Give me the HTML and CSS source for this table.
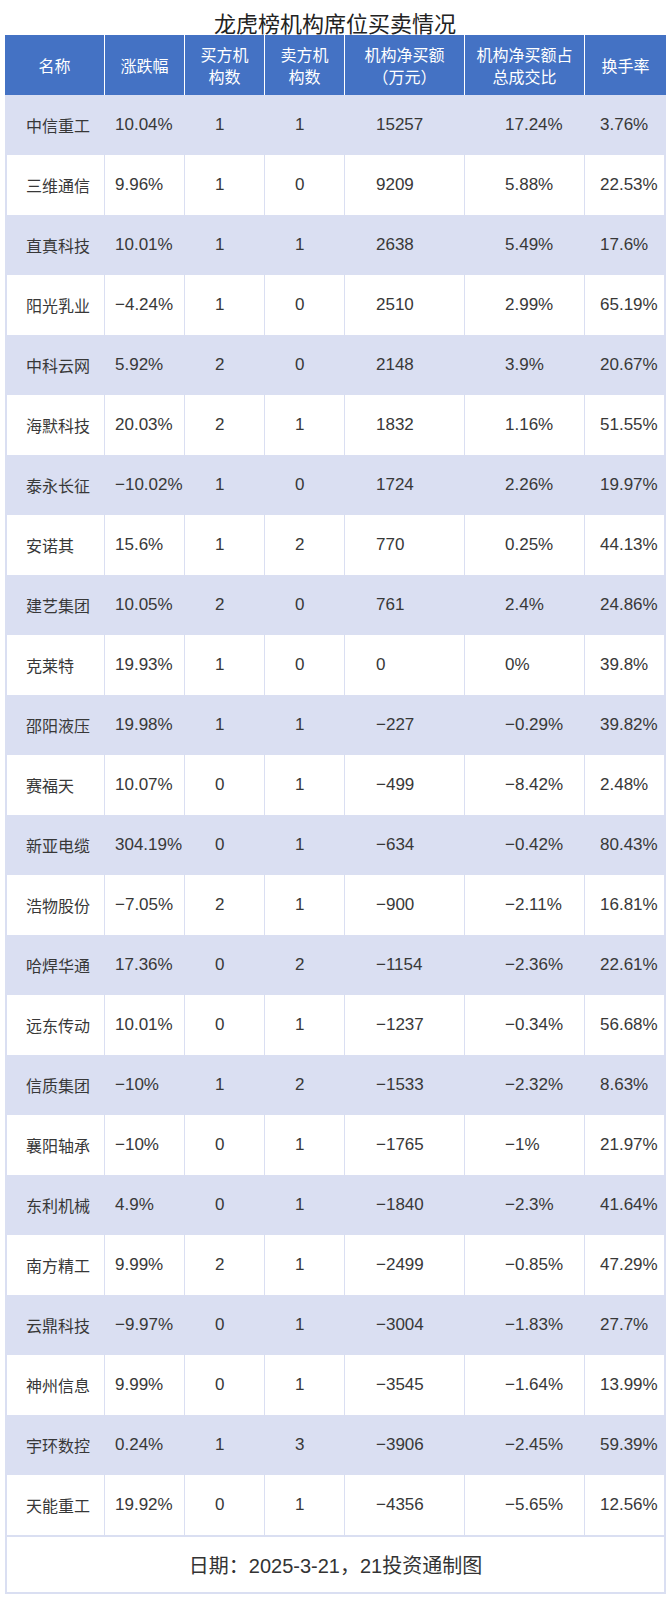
FILE: index.html
```html
<!DOCTYPE html>
<html lang="zh">
<head>
<meta charset="utf-8">
<title>龙虎榜机构席位买卖情况</title>
<link rel="stylesheet" href="styles.css">
</head>
<body>
<div class="page">
  <h1 class="title">龙虎榜机构席位买卖情况</h1>
  <div class="tbl">
    <div class="head">
      <div class="h">名称</div>
      <div class="h">涨跌幅</div>
      <div class="h">买方机<br>构数</div>
      <div class="h">卖方机<br>构数</div>
      <div class="h">机构净买额<br>（万元）</div>
      <div class="h">机构净买额占<br>总成交比</div>
      <div class="h">换手率</div>
    </div>
    <div class="body">
      <div class="row odd"><div class="c c1">中信重工</div><div class="c c2">10.04%</div><div class="c c3">1</div><div class="c c4">1</div><div class="c c5">15257</div><div class="c c6">17.24%</div><div class="c c7">3.76%</div></div>
      <div class="row"><div class="c c1">三维通信</div><div class="c c2">9.96%</div><div class="c c3">1</div><div class="c c4">0</div><div class="c c5">9209</div><div class="c c6">5.88%</div><div class="c c7">22.53%</div></div>
      <div class="row odd"><div class="c c1">直真科技</div><div class="c c2">10.01%</div><div class="c c3">1</div><div class="c c4">1</div><div class="c c5">2638</div><div class="c c6">5.49%</div><div class="c c7">17.6%</div></div>
      <div class="row"><div class="c c1">阳光乳业</div><div class="c c2">−4.24%</div><div class="c c3">1</div><div class="c c4">0</div><div class="c c5">2510</div><div class="c c6">2.99%</div><div class="c c7">65.19%</div></div>
      <div class="row odd"><div class="c c1">中科云网</div><div class="c c2">5.92%</div><div class="c c3">2</div><div class="c c4">0</div><div class="c c5">2148</div><div class="c c6">3.9%</div><div class="c c7">20.67%</div></div>
      <div class="row"><div class="c c1">海默科技</div><div class="c c2">20.03%</div><div class="c c3">2</div><div class="c c4">1</div><div class="c c5">1832</div><div class="c c6">1.16%</div><div class="c c7">51.55%</div></div>
      <div class="row odd"><div class="c c1">泰永长征</div><div class="c c2">−10.02%</div><div class="c c3">1</div><div class="c c4">0</div><div class="c c5">1724</div><div class="c c6">2.26%</div><div class="c c7">19.97%</div></div>
      <div class="row"><div class="c c1">安诺其</div><div class="c c2">15.6%</div><div class="c c3">1</div><div class="c c4">2</div><div class="c c5">770</div><div class="c c6">0.25%</div><div class="c c7">44.13%</div></div>
      <div class="row odd"><div class="c c1">建艺集团</div><div class="c c2">10.05%</div><div class="c c3">2</div><div class="c c4">0</div><div class="c c5">761</div><div class="c c6">2.4%</div><div class="c c7">24.86%</div></div>
      <div class="row"><div class="c c1">克莱特</div><div class="c c2">19.93%</div><div class="c c3">1</div><div class="c c4">0</div><div class="c c5">0</div><div class="c c6">0%</div><div class="c c7">39.8%</div></div>
      <div class="row odd"><div class="c c1">邵阳液压</div><div class="c c2">19.98%</div><div class="c c3">1</div><div class="c c4">1</div><div class="c c5">−227</div><div class="c c6">−0.29%</div><div class="c c7">39.82%</div></div>
      <div class="row"><div class="c c1">赛福天</div><div class="c c2">10.07%</div><div class="c c3">0</div><div class="c c4">1</div><div class="c c5">−499</div><div class="c c6">−8.42%</div><div class="c c7">2.48%</div></div>
      <div class="row odd"><div class="c c1">新亚电缆</div><div class="c c2">304.19%</div><div class="c c3">0</div><div class="c c4">1</div><div class="c c5">−634</div><div class="c c6">−0.42%</div><div class="c c7">80.43%</div></div>
      <div class="row"><div class="c c1">浩物股份</div><div class="c c2">−7.05%</div><div class="c c3">2</div><div class="c c4">1</div><div class="c c5">−900</div><div class="c c6">−2.11%</div><div class="c c7">16.81%</div></div>
      <div class="row odd"><div class="c c1">哈焊华通</div><div class="c c2">17.36%</div><div class="c c3">0</div><div class="c c4">2</div><div class="c c5">−1154</div><div class="c c6">−2.36%</div><div class="c c7">22.61%</div></div>
      <div class="row"><div class="c c1">远东传动</div><div class="c c2">10.01%</div><div class="c c3">0</div><div class="c c4">1</div><div class="c c5">−1237</div><div class="c c6">−0.34%</div><div class="c c7">56.68%</div></div>
      <div class="row odd"><div class="c c1">信质集团</div><div class="c c2">−10%</div><div class="c c3">1</div><div class="c c4">2</div><div class="c c5">−1533</div><div class="c c6">−2.32%</div><div class="c c7">8.63%</div></div>
      <div class="row"><div class="c c1">襄阳轴承</div><div class="c c2">−10%</div><div class="c c3">0</div><div class="c c4">1</div><div class="c c5">−1765</div><div class="c c6">−1%</div><div class="c c7">21.97%</div></div>
      <div class="row odd"><div class="c c1">东利机械</div><div class="c c2">4.9%</div><div class="c c3">0</div><div class="c c4">1</div><div class="c c5">−1840</div><div class="c c6">−2.3%</div><div class="c c7">41.64%</div></div>
      <div class="row"><div class="c c1">南方精工</div><div class="c c2">9.99%</div><div class="c c3">2</div><div class="c c4">1</div><div class="c c5">−2499</div><div class="c c6">−0.85%</div><div class="c c7">47.29%</div></div>
      <div class="row odd"><div class="c c1">云鼎科技</div><div class="c c2">−9.97%</div><div class="c c3">0</div><div class="c c4">1</div><div class="c c5">−3004</div><div class="c c6">−1.83%</div><div class="c c7">27.7%</div></div>
      <div class="row"><div class="c c1">神州信息</div><div class="c c2">9.99%</div><div class="c c3">0</div><div class="c c4">1</div><div class="c c5">−3545</div><div class="c c6">−1.64%</div><div class="c c7">13.99%</div></div>
      <div class="row odd"><div class="c c1">宇环数控</div><div class="c c2">0.24%</div><div class="c c3">1</div><div class="c c4">3</div><div class="c c5">−3906</div><div class="c c6">−2.45%</div><div class="c c7">59.39%</div></div>
      <div class="row"><div class="c c1">天能重工</div><div class="c c2">19.92%</div><div class="c c3">0</div><div class="c c4">1</div><div class="c c5">−4356</div><div class="c c6">−5.65%</div><div class="c c7">12.56%</div></div>
    </div>
    <div class="foot">日期：2025-3-21，21投资通制图</div>
  </div>
</div>
</body>
</html>
```

FILE: styles.css
```css
* { box-sizing: border-box; }

body {
  margin: 0;
  background: #ffffff;
  color: #333333;
  font-family: "Liberation Sans", "Noto Sans CJK SC", sans-serif;
}

.page {
  width: 670px;
}

.title {
  margin: 0;
  height: 35px;
  padding-top: 9px;
  font-family: "Noto Sans CJK SC", sans-serif;
  font-weight: 400;
  font-size: 22px;
  line-height: 26px;
  text-align: center;
  color: #222222;
}

.tbl {
  margin-left: 5px;
  width: 661px;
}

.head {
  display: grid;
  grid-template-columns: 100px 80px 80px 80px 120px 120px 81px;
  height: 60px;
  background: #4472c4;
}

.h {
  display: flex;
  align-items: center;
  justify-content: center;
  text-align: center;
  color: #ffffff;
  font-family: "Noto Sans CJK SC", sans-serif;
  font-size: 16px;
  line-height: 22px;
  border-right: 1px solid #ffffff;
}

.h:last-child {
  border-right: none;
}

.body {
  border-left: 2px solid #dadff2;
  border-right: 2px solid #dadff2;
}

.row {
  display: grid;
  grid-template-columns: 98px 80px 80px 80px 120px 120px 79px;
  height: 60px;
  background: #ffffff;
}

.row.odd {
  background: #dadff2;
}

.c {
  display: flex;
  align-items: center;
  white-space: nowrap;
  font-size: 17px;
  color: #383838;
  border-right: 1px solid #dadff2;
}

.c7 {
  border-right: none;
}

.c1 {
  padding-left: 19px;
  font-family: "Noto Sans CJK SC", sans-serif;
  font-size: 16px;
}

.c2 { padding-left: 10px; }
.c3 { padding-left: 30px; }
.c4 { padding-left: 30px; }
.c5 { padding-left: 31px; }
.c6 { padding-left: 40px; }
.c7 { padding-left: 15px; }

.foot {
  height: 59px;
  display: flex;
  align-items: center;
  justify-content: center;
  border: 2px solid #dadff2;
  font-size: 20px;
  color: #333333;
}
```
